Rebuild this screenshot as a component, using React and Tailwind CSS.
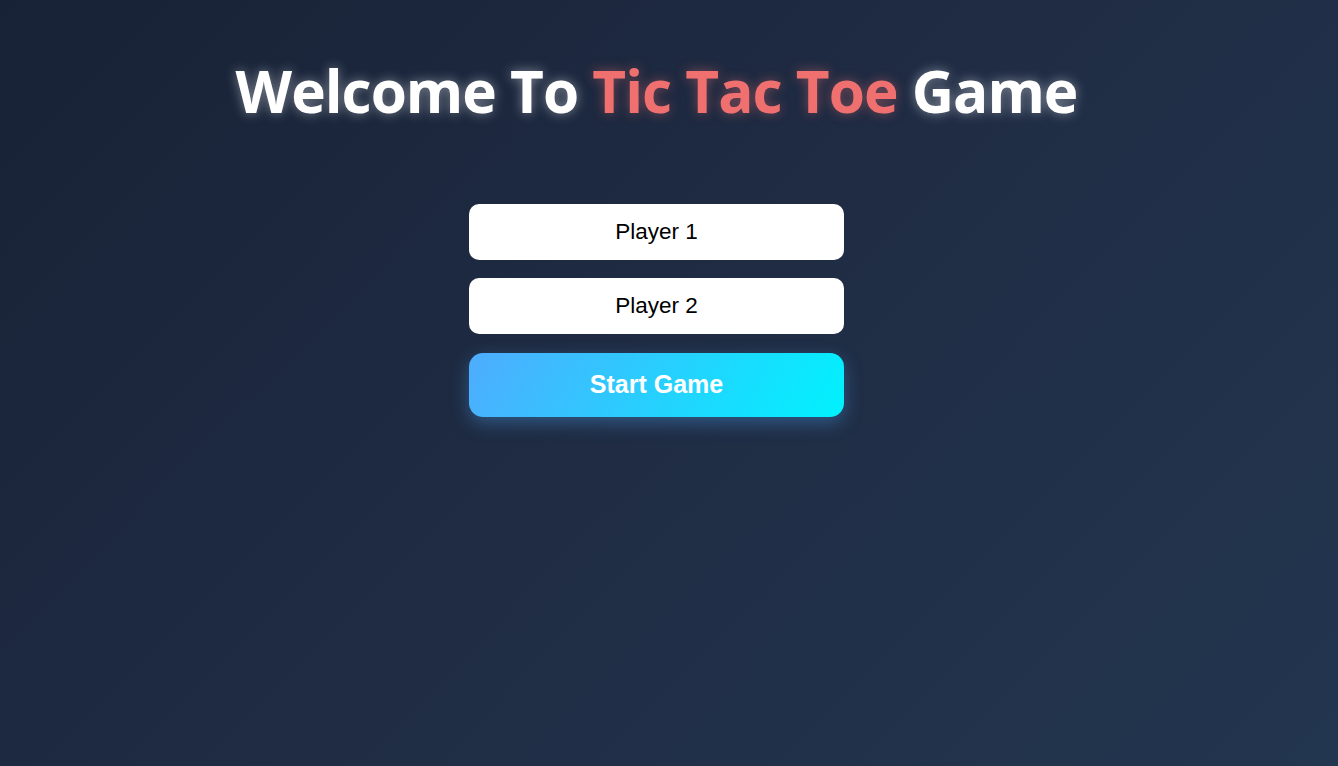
import React from 'react';

const App = () => {
  return (
    <div className="min-h-[766px] w-full bg-[linear-gradient(135deg,#182236_0%,#1f2c44_50%,#23364f_100%)] font-['Liberation_Sans',Arial,sans-serif]">
      <div className="w-[1313px] flex flex-col items-center pt-[52px]">
        <h1 className="font-['Open_Sans',sans-serif] font-bold text-[58.5px] leading-[76px] tracking-[-1px] text-white [text-shadow:0_0_12px_rgba(255,255,255,0.45)]">
          Welcome To <span className="text-[#f07070] [text-shadow:0_0_12px_rgba(240,112,112,0.45)]">Tic Tac Toe</span> Game
        </h1>

        <div className="mt-[76px] w-[375px] flex flex-col">
          <input
            type="text"
            defaultValue="Player 1"
            className="h-[56px] w-full rounded-[10px] bg-white text-center text-[22.5px] text-black outline-none"
          />
          <input
            type="text"
            defaultValue="Player 2"
            className="mt-[18px] h-[56px] w-full rounded-[10px] bg-white text-center text-[22.5px] text-black outline-none"
          />
          <button className="mt-[19px] h-[64px] w-full rounded-[14px] bg-[linear-gradient(120deg,#4facfe_0%,#00f2fe_100%)] text-[25px] font-bold text-white shadow-[0_6px_18px_rgba(79,172,254,0.35)]">
            Start Game
          </button>
        </div>
      </div>
    </div>
  );
};

export default App;
